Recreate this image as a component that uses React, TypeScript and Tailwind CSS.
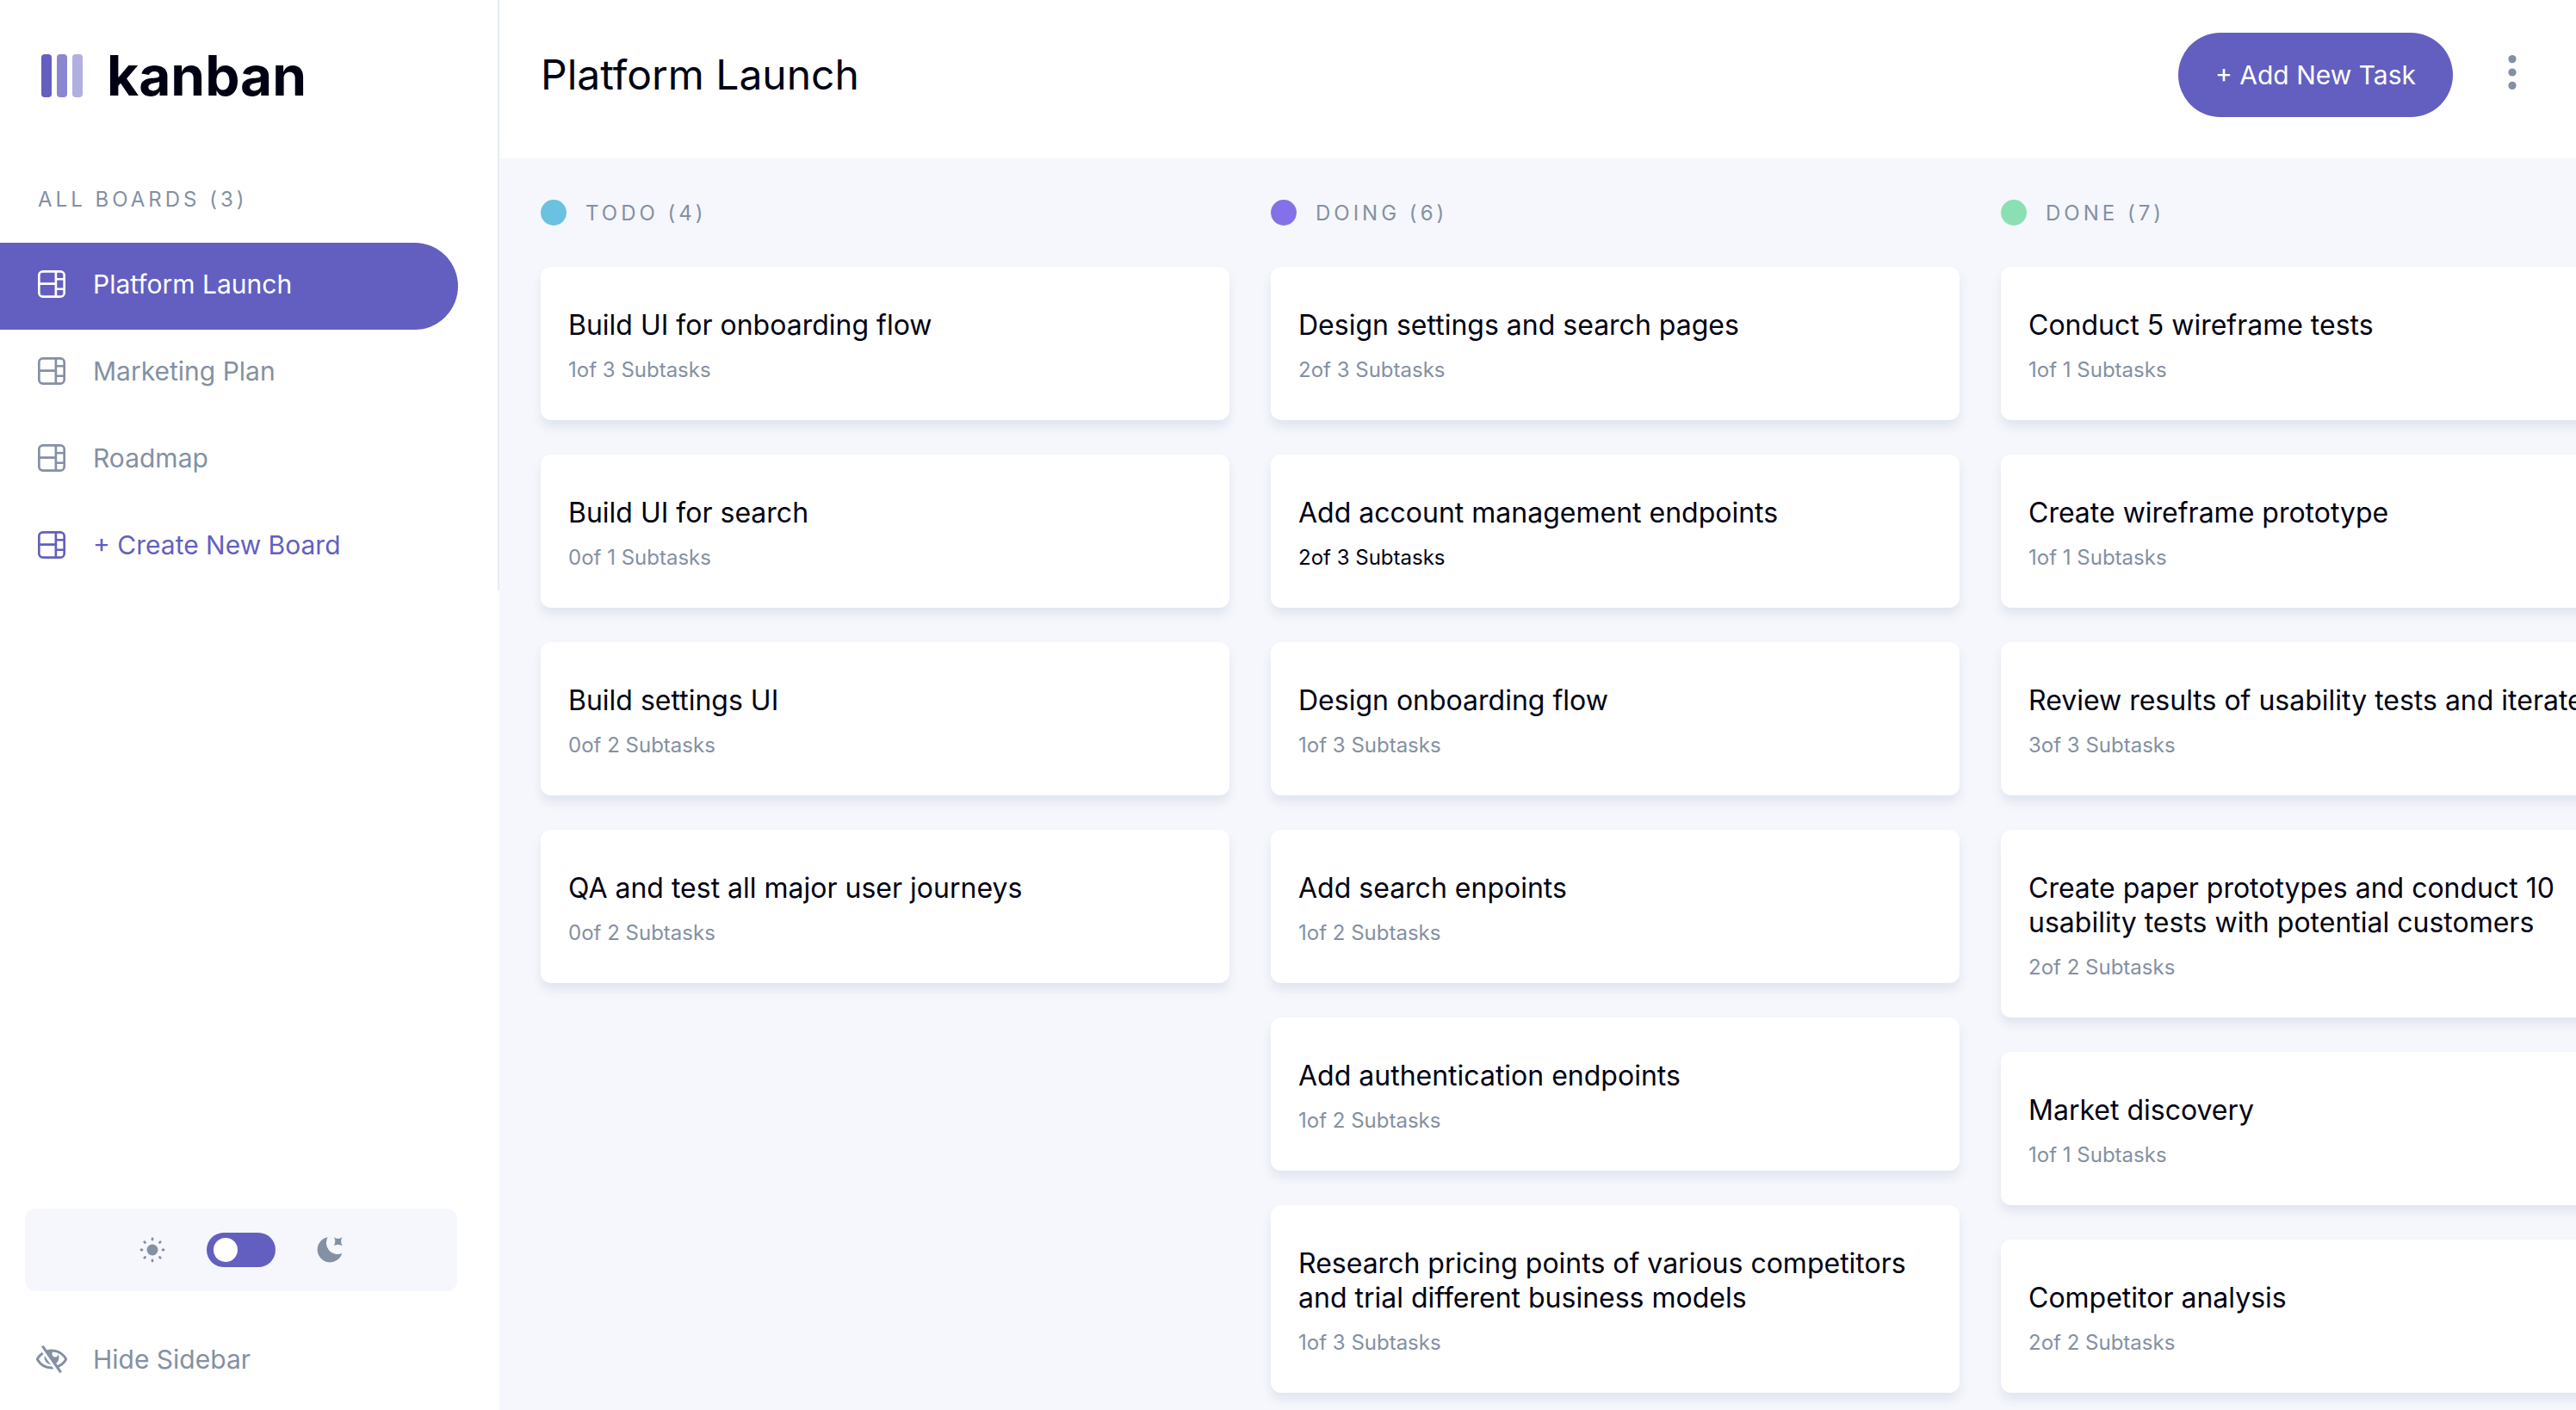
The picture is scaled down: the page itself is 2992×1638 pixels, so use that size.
import { useState } from 'react';

type Task = { title: string; done: number; total: number; highlighted?: boolean };
type Column = { name: string; count: number; dot: string; tasks: Task[] };

const boards = ['Platform Launch', 'Marketing Plan', 'Roadmap'];

const columns: Column[] = [
  {
    name: 'TODO',
    count: 4,
    dot: 'bg-[#6ac1e0]',
    tasks: [
      { title: 'Build UI for onboarding flow', done: 1, total: 3 },
      { title: 'Build UI for search', done: 0, total: 1 },
      { title: 'Build settings UI', done: 0, total: 2 },
      { title: 'QA and test all major user journeys', done: 0, total: 2 },
    ],
  },
  {
    name: 'DOING',
    count: 6,
    dot: 'bg-[#8471e8]',
    tasks: [
      { title: 'Design settings and search pages', done: 2, total: 3 },
      { title: 'Add account management endpoints', done: 2, total: 3, highlighted: true },
      { title: 'Design onboarding flow', done: 1, total: 3 },
      { title: 'Add search enpoints', done: 1, total: 2 },
      { title: 'Add authentication endpoints', done: 1, total: 2 },
      {
        title: 'Research pricing points of various competitors and trial different business models',
        done: 1,
        total: 3,
      },
    ],
  },
  {
    name: 'DONE',
    count: 7,
    dot: 'bg-[#8ae0b3]',
    tasks: [
      { title: 'Conduct 5 wireframe tests', done: 1, total: 1 },
      { title: 'Create wireframe prototype', done: 1, total: 1 },
      { title: 'Review results of usability tests and iterate', done: 3, total: 3 },
      {
        title: 'Create paper prototypes and conduct 10 usability tests with potential customers',
        done: 2,
        total: 2,
      },
      { title: 'Market discovery', done: 1, total: 1 },
      { title: 'Competitor analysis', done: 2, total: 2 },
    ],
  },
];

function BoardIcon() {
  return (
    <svg viewBox="0 0 16 16" className="size-8 shrink-0 fill-current" aria-hidden="true">
      <path d="M0 2.889A2.889 2.889 0 0 1 2.889 0H13.11A2.889 2.889 0 0 1 16 2.889V13.11A2.888 2.888 0 0 1 13.111 16H2.89A2.889 2.889 0 0 1 0 13.111V2.89Zm1.333 5.555v4.667c0 .859.697 1.556 1.556 1.556h6.889V8.444H1.333Zm8.445-1.333V1.333h-6.89A1.556 1.556 0 0 0 1.334 2.89V7.11h8.445Zm4.889-1.333H11.11v4.444h3.556V5.778Zm0 5.778H11.11v3.11h2a1.556 1.556 0 0 0 1.556-1.555v-1.555Zm0-7.112V2.89a1.555 1.555 0 0 0-1.556-1.556h-2v3.111h3.556Z" />
    </svg>
  );
}

function HideIcon() {
  return (
    <svg viewBox="0 0 18 16" className="h-8 w-9 shrink-0 fill-current" aria-hidden="true">
      <path d="M8.522 11.223a4.252 4.252 0 0 1-3.654-5.22l3.654 5.22ZM9 12.25A8.685 8.685 0 0 1 1.5 8a8.612 8.612 0 0 1 2.76-2.864l-.86-1.23A10.112 10.112 0 0 0 .208 7.238a1.5 1.5 0 0 0 0 1.524A10.187 10.187 0 0 0 9 13.75c.414 0 .828-.025 1.239-.074l-1-1.43A8.88 8.88 0 0 1 9 12.25Zm8.792-3.488a10.14 10.14 0 0 1-4.486 4.046l1.504 2.148a.375.375 0 0 1-.092.523l-.648.453a.375.375 0 0 1-.523-.092L3.19 1.044A.375.375 0 0 1 3.282.52L3.93.068a.375.375 0 0 1 .523.092l1.735 2.479A9.308 9.308 0 0 1 9 2.25c3.746 0 7.031 2 8.792 4.988a1.5 1.5 0 0 1 0 1.524ZM16.5 8a8.674 8.674 0 0 0-6.755-4.219A1.75 1.75 0 1 0 12.75 5v-.001a4.25 4.25 0 0 1-1.154 5.366l.834 1.192A8.641 8.641 0 0 0 16.5 8Z" />
    </svg>
  );
}

function SunIcon() {
  return (
    <svg viewBox="-15 -15 30 30" className="size-[30px] text-[#8490a3]" aria-hidden="true">
      <circle r="6.5" fill="currentColor" />
      <g stroke="currentColor" strokeWidth="2.8" strokeLinecap="round">
        {[0, 45, 90, 135, 180, 225, 270, 315].map((angle) => (
          <path key={angle} d="M12 0H13" transform={`rotate(${angle})`} />
        ))}
      </g>
    </svg>
  );
}

function MoonIcon() {
  return (
    <svg viewBox="-1 -1 88 88" className="size-[30px] fill-[#8490a3]" aria-hidden="true">
      <path d="M36 0A43 43 0 1 0 85 55A39 39 0 0 1 36 0Z" />
      <path d="M57 0Q71 9 86 0Q77 14 86 29Q71 20 57 29Q66 14 57 0Z" />
    </svg>
  );
}

function Sidebar() {
  const [dark, setDark] = useState(false);
  return (
    <aside className="flex w-[580px] shrink-0 flex-col justify-between bg-white">
      <div className="border-r-2 border-[#e4ebfa]">
        <a href="#" className="flex items-center gap-7 pt-[58px] pl-12">
          <svg viewBox="0 0 24 25" className="h-[50px] w-12 fill-[#635fc0]" aria-hidden="true">
            <rect width="6" height="25" rx="2" />
            <rect x="9" width="6" height="25" rx="2" opacity=".75" />
            <rect x="18" width="6" height="25" rx="2" opacity=".5" />
          </svg>
          <span className="text-[64px] leading-[60px] font-bold text-[#000112]">kanban</span>
        </a>
        <h2 className="mt-[98px] pl-11 text-[24px] leading-8 tracking-[4px] text-[#8490a3]">
          ALL BOARDS (3)
        </h2>
        <nav className="mt-[34px] pr-[46px]">
          {boards.map((board, i) => (
            <button
              key={board}
              type="button"
              className={
                i === 0
                  ? 'flex w-full items-center gap-8 rounded-r-full bg-[#635fc0] pt-8 pb-[37px] pl-11 text-[30px] leading-8 text-white'
                  : 'flex w-full items-center gap-8 pt-8 pb-[37px] pl-11 text-[30px] leading-8 text-[#8490a3]'
              }
            >
              <BoardIcon />
              {board}
            </button>
          ))}
          <button
            type="button"
            className="flex w-full items-center gap-8 pt-8 pb-[37px] pl-11 text-[30px] leading-8 text-[#635fc0]"
          >
            <BoardIcon />+ Create New Board
          </button>
        </nav>
      </div>

      <div>
        <div className="mr-[49px] ml-[29px] flex h-24 items-center justify-center gap-12 rounded-xl bg-[#f5f7fc]">
          <SunIcon />
          <input
            type="checkbox"
            role="switch"
            aria-label="Dark theme"
            checked={dark}
            onChange={(e) => setDark(e.target.checked)}
            className="flex h-10 w-20 cursor-pointer appearance-none items-center rounded-full bg-[#635fc0] px-2 before:size-7 before:rounded-full before:bg-white before:content-[''] checked:justify-end"
          />
          <MoonIcon />
        </div>
        <button
          type="button"
          className="mt-[63px] flex items-center gap-[30px] pb-[43px] pl-[42px] text-[30px] leading-8 text-[#8490a3]"
        >
          <HideIcon />
          Hide Sidebar
        </button>
      </div>
    </aside>
  );
}

function TaskCard({ task }: { task: Task }) {
  return (
    <article className="rounded-xl bg-white px-8 pt-12 pb-[42px] shadow-[0_8px_12px_rgba(54,78,126,0.1)]">
      <h3 className="text-[32px] leading-10 text-[#000112]">{task.title}</h3>
      <p
        className={
          task.highlighted
            ? 'mt-4 text-[24px] leading-8 text-[#000112]'
            : 'mt-4 text-[24px] leading-8 text-[#8490a3]'
        }
      >
        {task.done}of {task.total} Subtasks
      </p>
    </article>
  );
}

export default function App() {
  return (
    <div className="flex h-screen overflow-hidden bg-[#f5f7fc] font-['Inter',sans-serif]">
      <Sidebar />
      <div className="flex min-w-0 flex-1 flex-col">
        <header className="flex items-center justify-between bg-white pt-[38px] pr-[49px] pb-12 pl-12">
          <h1 className="text-[48px] leading-[60px] text-[#000112]">Platform Launch</h1>
          <div className="flex gap-11">
            <button
              type="button"
              className="h-[98px] rounded-full bg-[#635fc0] px-[43px] text-[30px] leading-8 text-white"
            >
              + Add New Task
            </button>
            <button type="button" aria-label="Board menu" className="h-[92px] px-5">
              <svg viewBox="0 0 5 20" className="h-10 w-[10px] fill-[#8490a3]" aria-hidden="true">
                <circle cx="2.5" cy="2.308" r="2.308" />
                <circle cx="2.5" cy="10" r="2.308" />
                <circle cx="2.5" cy="17.692" r="2.308" />
              </svg>
            </button>
          </div>
        </header>
        <main className="flex flex-1 gap-12 overflow-hidden pt-12 pl-12">
          {columns.map((column) => (
            <section key={column.name} className="w-[800px] shrink-0">
              <h2 className="flex items-start gap-[22px] text-[24px] leading-8 tracking-[4px] text-[#8490a3]">
                <span className={`size-[30px] rounded-full ${column.dot}`} />
                {column.name} ({column.count})
              </h2>
              <div className="mt-[46px] flex flex-col gap-10">
                {column.tasks.map((task) => (
                  <TaskCard key={task.title} task={task} />
                ))}
              </div>
            </section>
          ))}
        </main>
      </div>
    </div>
  );
}
